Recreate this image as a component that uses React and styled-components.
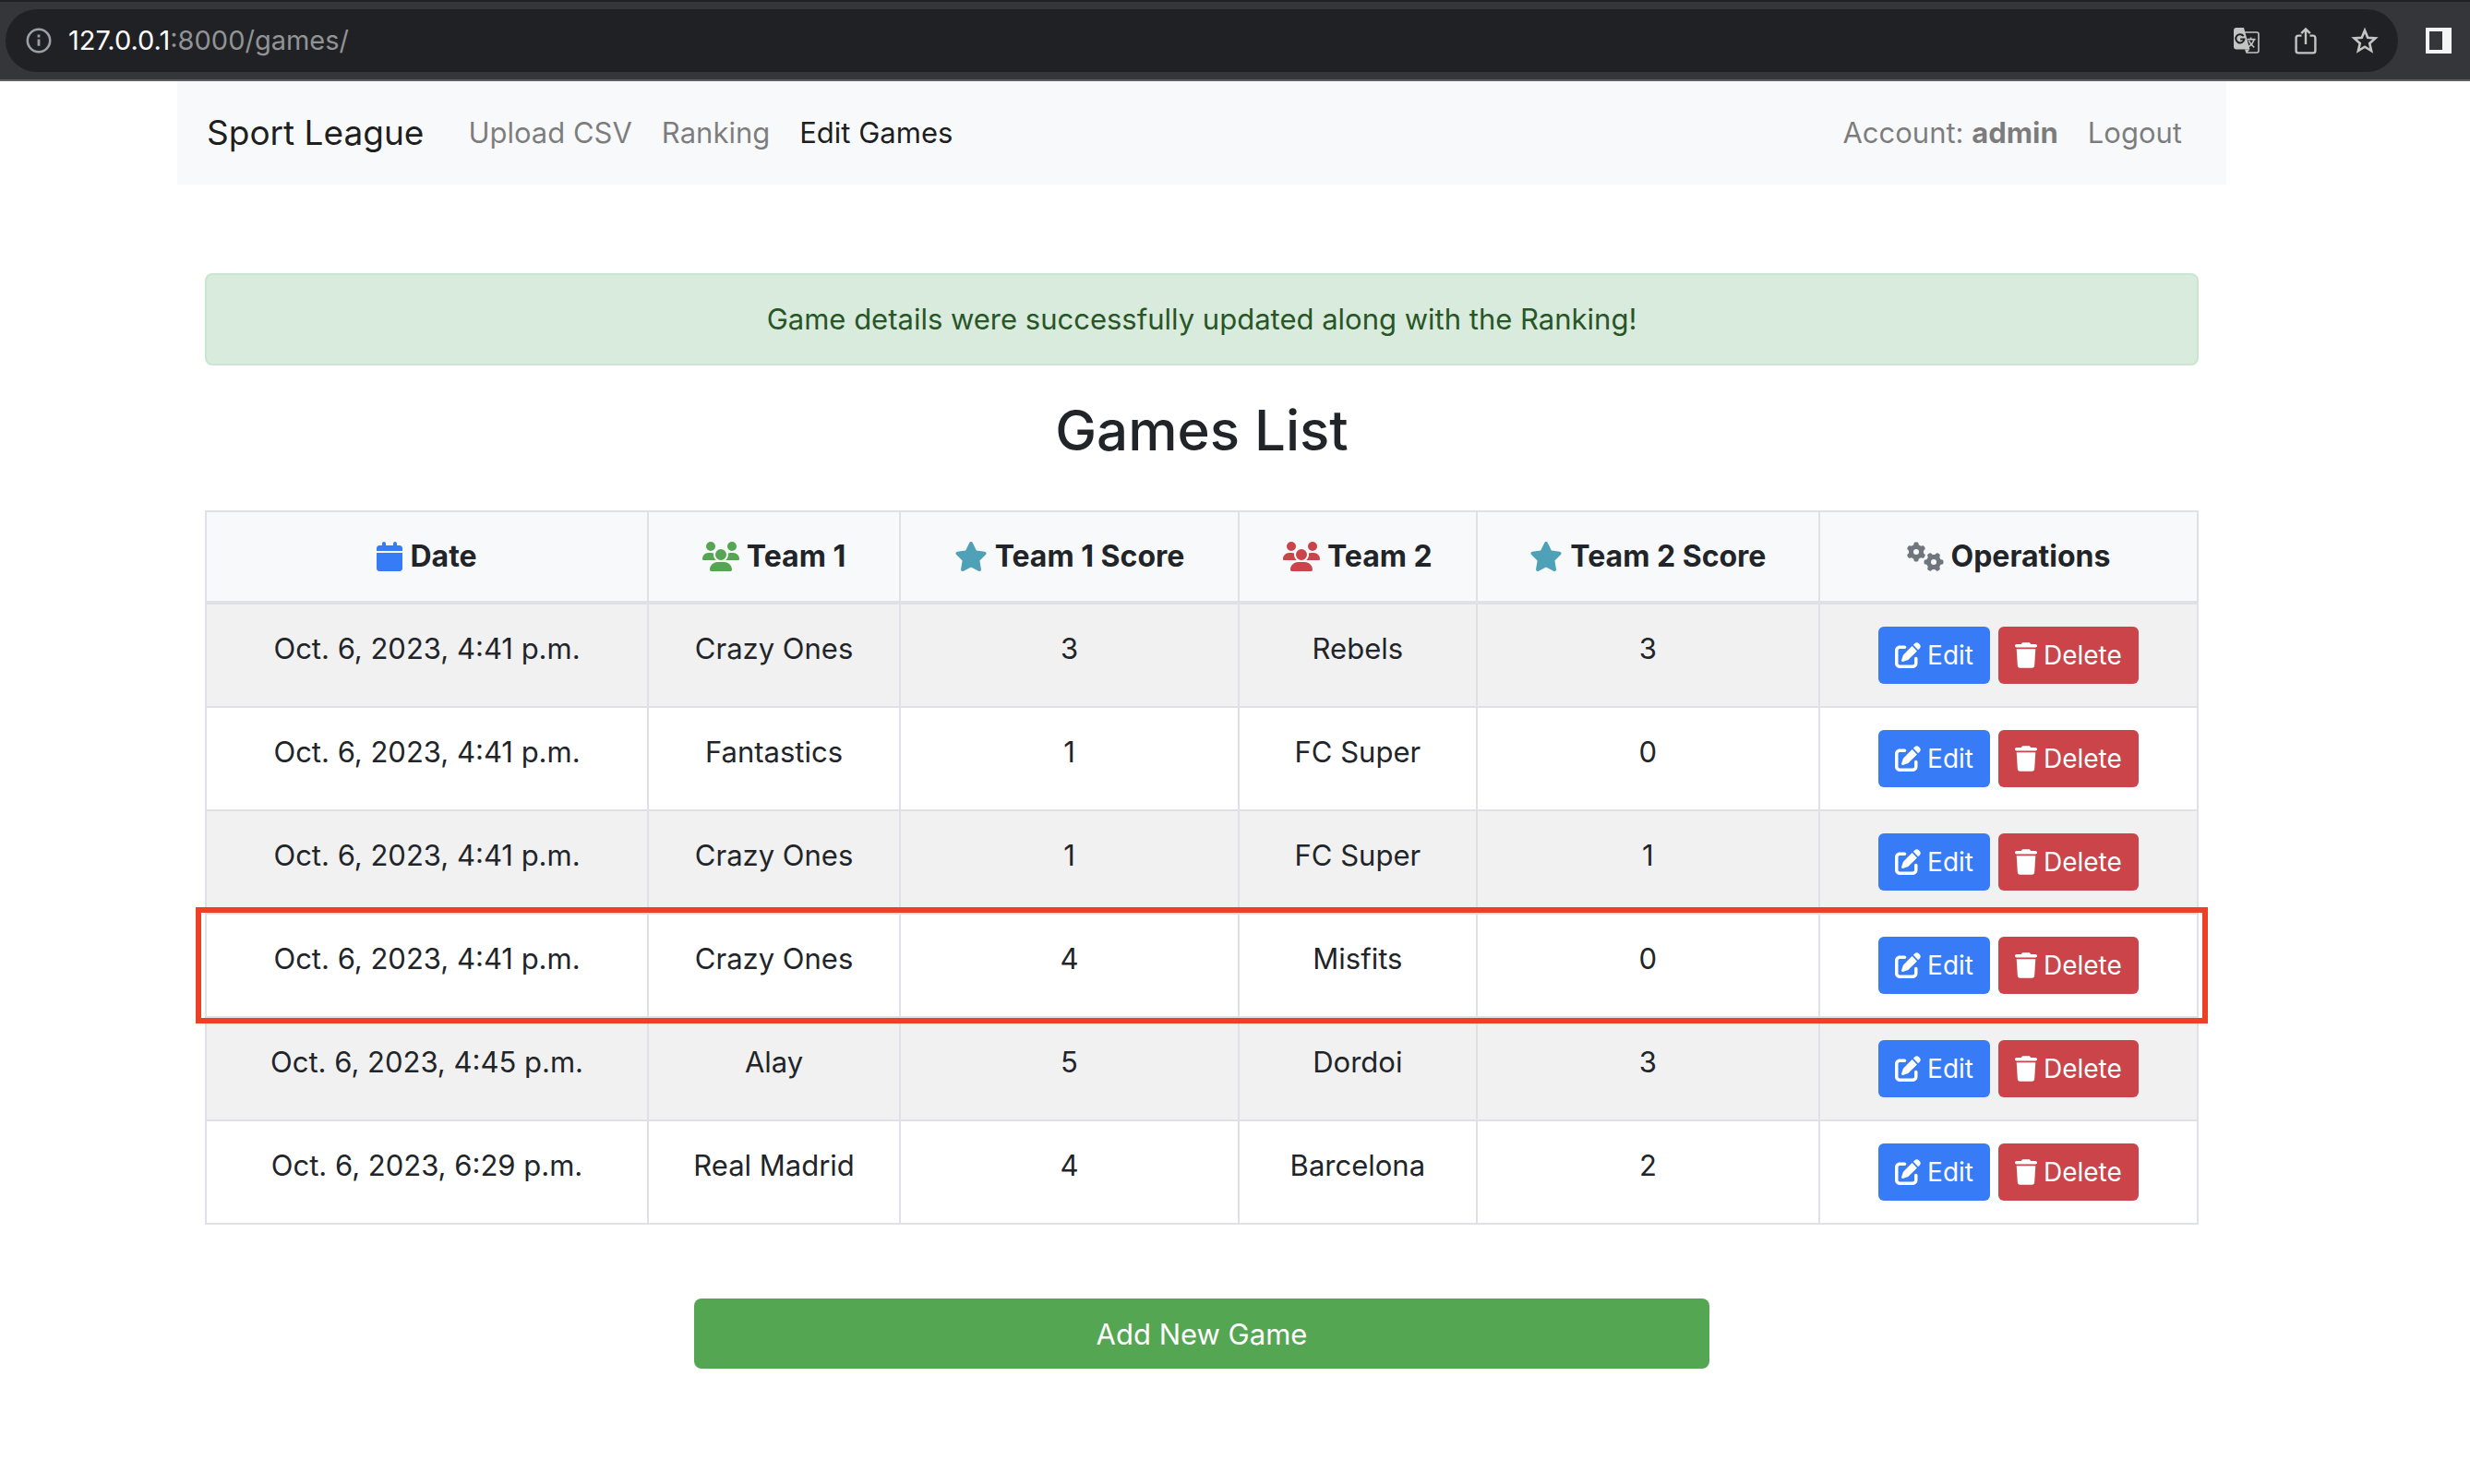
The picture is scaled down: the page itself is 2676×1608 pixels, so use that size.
import React from "react";
import styled, { createGlobalStyle } from "styled-components";
import {
  FaCalendar,
  FaGears,
  FaPenToSquare,
  FaStar,
  FaTrash,
  FaUsers,
} from "react-icons/fa6";

const GlobalStyle = createGlobalStyle`
  *, *::before, *::after { box-sizing: border-box; }
  body {
    margin: 0;
    background: #fff;
    color: #212529;
    font-family: Inter, "Liberation Sans", sans-serif;
    font-size: 31px;
    line-height: 48px;
  }
`;

const BrowserBar = styled.header`
  display: flex;
  align-items: center;
  gap: 22px;
  height: 88px;
  padding: 0 12px 0 6px;
  background: #35363a;
  border-top: 2px solid #202124;
  border-bottom: 2px solid #5f6063;
`;

const AddressBar = styled.div`
  flex: 1;
  display: flex;
  align-items: center;
  height: 68px;
  padding: 0 14px;
  border-radius: 34px;
  background: #202124;
`;

const Address = styled.span`
  flex: 1;
  margin-left: 10px;
  color: #919395;
  font-size: 29px;
`;

const Host = styled.span`
  color: #fff;
`;

const BarTools = styled.div`
  display: flex;
  gap: 20px;
`;

const BarButton = styled.button`
  display: flex;
  align-items: center;
  justify-content: center;
  width: 44px;
  height: 44px;
  padding: 0;
  border: 0;
  background: none;
  color: ${(p) => p.$color || "#c4c4c4"};
`;

const Page = styled.div`
  padding-right: 72px;
`;

const Container = styled.div`
  max-width: 2220px;
  margin: 0 auto;
`;

const NavBar = styled.nav`
  display: flex;
  align-items: center;
  height: 112px;
  padding: 0 32px;
  background: #f8f9fa;
`;

const Brand = styled.a`
  margin-right: 32px;
  color: rgba(0, 0, 0, 0.9);
  font-size: 37px;
  text-decoration: none;
`;

const NavGroup = styled.div`
  display: flex;
  margin-left: ${(p) => (p.$end ? "auto" : "0")};
`;

const NavLink = styled.a`
  padding: 16px;
  color: ${(p) => (p.$active ? "rgba(0, 0, 0, 0.9)" : "rgba(0, 0, 0, 0.5)")};
  text-decoration: none;
`;

const Main = styled.main`
  padding: 96px 30px;
`;

const Alert = styled.div`
  padding: 24px 40px;
  border: 2px solid #c9e6ce;
  border-radius: 8px;
  background: #d9ebdc;
  color: #285627;
  text-align: center;
`;

const Title = styled.h2`
  margin: 32px 0 48px;
  font-size: 60px;
  font-weight: 500;
  line-height: 77px;
  text-align: center;
`;

const Table = styled.table`
  width: 100%;
  table-layout: fixed;
  border-collapse: collapse;
  text-align: center;
`;

const Column = styled.col`
  width: ${(p) => p.$share}%;
`;

const HeadCell = styled.th`
  padding: 24px;
  border: 2px solid #dee2e6;
  border-bottom-width: 4px;
  background: #f8f9fa;
  font-size: 32px;
  font-weight: 700;
`;

const HeadLabel = styled.span`
  display: flex;
  align-items: center;
  justify-content: center;
  gap: 8px;
`;

const HeadIcon = styled.span`
  display: flex;
  color: ${(p) => p.$color};

  svg {
    width: ${(p) => p.$width}px;
    height: 32px;
  }
`;

const Row = styled.tr`
  position: relative;

  &:nth-child(odd) {
    background: #f1f1f1;
  }
`;

const HighlightedRow = styled(Row)`
  z-index: 1;

  &::after {
    content: "";
    position: absolute;
    inset: -7px -11px;
    border: 6px solid #ec4127;
    pointer-events: none;
  }
`;

const Cell = styled.td`
  padding: 24px;
  border: 2px solid #dee2e6;
  vertical-align: top;
`;

const Actions = styled.div`
  display: flex;
  justify-content: center;
  gap: 9px;
`;

const ActionButton = styled.button`
  display: flex;
  align-items: center;
  gap: 7px;
  height: 62px;
  padding: 0 18px;
  border: 0;
  border-radius: 6px;
  background: ${(p) => (p.$danger ? "#ca444a" : "#377bf7")};
  color: #fff;
  font-family: inherit;
  font-size: 28px;

  svg {
    width: ${(p) => (p.$danger ? 24 : 28)}px;
    height: 28px;
  }
`;

const AddButton = styled.button`
  display: block;
  width: 1100px;
  max-width: 100%;
  height: 76px;
  margin: 80px auto 0;
  border: 0;
  border-radius: 8px;
  background: #55a653;
  color: #fff;
  font-family: inherit;
  font-size: 31px;
`;

const columns = [
  { label: "Date", icon: FaCalendar, width: 28, color: "#377bf7", share: 22.2 },
  { label: "Team 1", icon: FaUsers, width: 40, color: "#55a653", share: 12.65 },
  { label: "Team 1 Score", icon: FaStar, width: 36, color: "#4ea1b7", share: 17 },
  { label: "Team 2", icon: FaUsers, width: 40, color: "#ca444a", share: 11.95 },
  { label: "Team 2 Score", icon: FaStar, width: 36, color: "#4ea1b7", share: 17.2 },
  { label: "Operations", icon: FaGears, width: 40, color: "#6f767d", share: 19 },
];

const games = [
  ["Oct. 6, 2023, 4:41 p.m.", "Crazy Ones", 3, "Rebels", 3],
  ["Oct. 6, 2023, 4:41 p.m.", "Fantastics", 1, "FC Super", 0],
  ["Oct. 6, 2023, 4:41 p.m.", "Crazy Ones", 1, "FC Super", 1],
  ["Oct. 6, 2023, 4:41 p.m.", "Crazy Ones", 4, "Misfits", 0],
  ["Oct. 6, 2023, 4:45 p.m.", "Alay", 5, "Dordoi", 3],
  ["Oct. 6, 2023, 6:29 p.m.", "Real Madrid", 4, "Barcelona", 2],
];

const HIGHLIGHTED = 3;

const InfoIcon = () => (
  <svg width="30" height="30" viewBox="0 0 30 30" fill="none" aria-hidden="true">
    <circle cx="15" cy="15" r="12.2" stroke="#9aa0a6" strokeWidth="2.6" />
    <path d="M15 13.4v7.4M15 8.6v2.8" stroke="#9aa0a6" strokeWidth="2.8" />
  </svg>
);

const TranslateIcon = () => (
  <svg width="28" height="28" viewBox="0 0 28 28" fill="none" aria-hidden="true">
    <path d="M12 5h13a2 2 0 0 1 2 2v18a2 2 0 0 1-2 2H14" stroke="currentColor" strokeWidth="1.6" />
    <path d="M3 0h8l6.4 23.6H3a3 3 0 0 1-3-3V3a3 3 0 0 1 3-3z" fill="currentColor" />
    <path d="M12 23.6h5.4L13.6 28z" fill="currentColor" />
    <path d="M10.6 9.1A4.6 4.6 0 1 0 11.4 12.6H7.2" stroke="#202124" strokeWidth="2" />
    <path d="M14.6 12.6h9M18.6 10.4v2.2M22 12.8c-.8 3-3 6-5.8 7.8M16.4 14c1 2.6 3.2 5.4 5.8 7.4" stroke="currentColor" strokeWidth="1.6" />
  </svg>
);

const ShareIcon = () => (
  <svg width="24" height="30" viewBox="0 0 24 30" fill="none" aria-hidden="true">
    <path d="M7.5 9.6H4A2.4 2.4 0 0 0 1.6 12v14A2.4 2.4 0 0 0 4 28.4h16a2.4 2.4 0 0 0 2.4-2.4V12A2.4 2.4 0 0 0 20 9.6h-3.5" stroke="currentColor" strokeWidth="2.4" />
    <path d="M12 19V2.4M7.2 7.2 12 2.4l4.8 4.8" stroke="currentColor" strokeWidth="2.4" />
  </svg>
);

const StarIcon = () => (
  <svg width="30" height="30" viewBox="0 0 30 30" fill="none" aria-hidden="true">
    <path
      d="M15 4l3.2 7.7 8.3.7-6.3 5.5 1.9 8.1-7.1-4.3L7.9 26l1.9-8.1-6.3-5.5 8.3-.7z"
      stroke="currentColor"
      strokeWidth="2.6"
    />
  </svg>
);

const SidePanelIcon = () => (
  <svg width="28" height="28" viewBox="0 0 28 28" aria-hidden="true">
    <path d="M0 0h28v28H0zM4 4v20h14V4z" fill="currentColor" fillRule="evenodd" />
  </svg>
);

export default function App() {
  return (
    <>
      <GlobalStyle />
      <BrowserBar>
        <AddressBar>
          <BarButton aria-label="Site information">
            <InfoIcon />
          </BarButton>
          <Address>
            <Host>127.0.0.1</Host>:8000/games/
          </Address>
          <BarTools>
            <BarButton aria-label="Translate">
              <TranslateIcon />
            </BarButton>
            <BarButton aria-label="Share">
              <ShareIcon />
            </BarButton>
            <BarButton aria-label="Bookmark">
              <StarIcon />
            </BarButton>
          </BarTools>
        </AddressBar>
        <BarButton aria-label="Side panel" $color="#f4f5f7">
          <SidePanelIcon />
        </BarButton>
      </BrowserBar>
      <Page>
        <Container>
          <NavBar>
            <Brand href="#">Sport League</Brand>
            <NavGroup>
              <NavLink href="#">Upload CSV</NavLink>
              <NavLink href="#">Ranking</NavLink>
              <NavLink href="#" $active>
                Edit Games
              </NavLink>
            </NavGroup>
            <NavGroup $end>
              <NavLink href="#">
                Account: <strong>admin</strong>
              </NavLink>
              <NavLink href="#">Logout</NavLink>
            </NavGroup>
          </NavBar>
          <Main>
            <Alert role="alert">
              Game details were successfully updated along with the Ranking!
            </Alert>
            <Title>Games List</Title>
            <Table>
              <colgroup>
                {columns.map((column) => (
                  <Column key={column.label} $share={column.share} />
                ))}
              </colgroup>
              <thead>
                <tr>
                  {columns.map(({ label, icon: Icon, width, color }) => (
                    <HeadCell key={label} scope="col">
                      <HeadLabel>
                        <HeadIcon $color={color} $width={width}>
                          <Icon />
                        </HeadIcon>
                        {label}
                      </HeadLabel>
                    </HeadCell>
                  ))}
                </tr>
              </thead>
              <tbody>
                {games.map((game, index) => {
                  const GameRow = index === HIGHLIGHTED ? HighlightedRow : Row;
                  return (
                    <GameRow key={index}>
                      {game.map((value, cell) => (
                        <Cell key={cell}>{value}</Cell>
                      ))}
                      <Cell>
                        <Actions>
                          <ActionButton>
                            <FaPenToSquare />
                            Edit
                          </ActionButton>
                          <ActionButton $danger>
                            <FaTrash />
                            Delete
                          </ActionButton>
                        </Actions>
                      </Cell>
                    </GameRow>
                  );
                })}
              </tbody>
            </Table>
            <AddButton>Add New Game</AddButton>
          </Main>
        </Container>
      </Page>
    </>
  );
}
